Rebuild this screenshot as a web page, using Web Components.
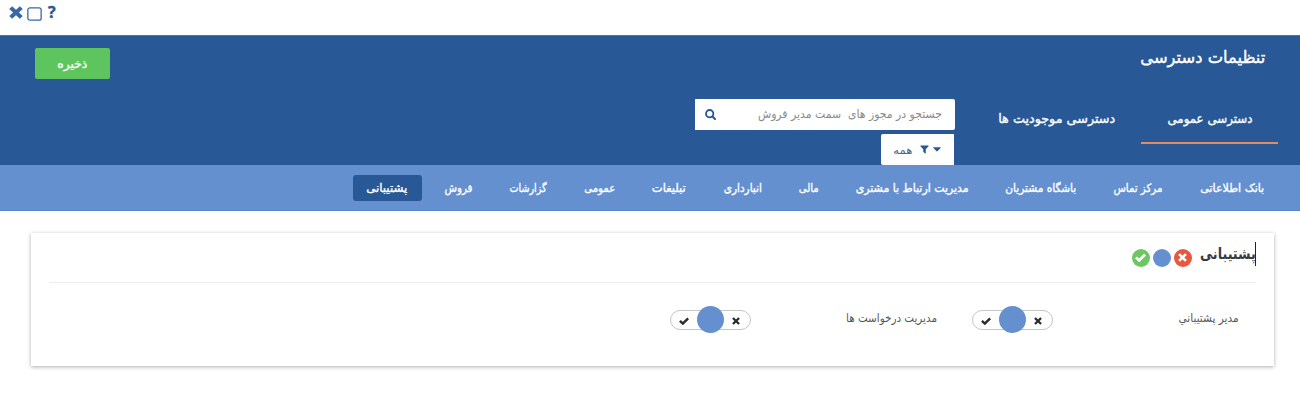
<!DOCTYPE html>
<html lang="fa" dir="rtl">
<head>
<meta charset="utf-8">
<title>تنظیمات دسترسی</title>
<style>
html,body{margin:0;background:#fff}
body{font-family:"DejaVu Sans","Noto Sans",sans-serif;overflow:hidden}
</style>
</head>
<body>
<access-page></access-page>
<script>
// Single-line label whose text is fitted to a given width.
class FitText extends HTMLElement {
  connectedCallback() {
    const w = +this.getAttribute('w'), s = this.getAttribute('size') || 11;
    const root = this.attachShadow({mode: 'open'});
    root.innerHTML = `<style>
      :host{display:inline-flex;flex:none;justify-content:flex-start;width:${w}px;font-size:${s}px;line-height:20px;height:20px;direction:rtl;-webkit-text-stroke:${this.getAttribute('stroke') || 0}px currentColor}
      span{display:block;flex:none;white-space:pre;transform-origin:100% 50%}
    </style><span><slot></slot></span>`;
    const span = root.querySelector('span');
    const real = span.getBoundingClientRect().width;
    if (real) span.style.transform = `scaleX(${w / real})`;
  }
}
customElements.define('fit-text', FitText);

const ICONS = {
  times: ['0 0 10 10', '<path d="M1.2 1.2 8.8 8.8M8.8 1.2 1.2 8.8" stroke="currentColor" stroke-width="2.9" fill="none"/>'],
  check: ['0 0 12 10', '<path d="M1.1 4.9 4.6 8.2 11 1.7" stroke="currentColor" stroke-width="3" fill="none"/>'],
  search: ['0 0 12 12', '<circle cx="5.1" cy="5.1" r="4" stroke="currentColor" stroke-width="2" fill="none"/><path d="M8.2 8.2 10.9 10.9" stroke="currentColor" stroke-width="2.2" stroke-linecap="round"/>'],
  filter: ['0 0 10 10', '<path d="M.6.6H9.4Q9.8 1.2 9.3 1.7L6.4 4.7V9.3Q6 9.8 5.5 9.4L3.6 7.6V4.7L.7 1.7Q.2 1.1.6.6Z" fill="currentColor"/>'],
  caret: ['0 0 8 5', '<path d="M.3.3H7.7Q8 .8 7.6 1.1L4.4 4.3Q4 4.6 3.6 4.3L.4 1.1Q0 .7.3.3Z" fill="currentColor"/>'],
  square: ['0 0 14 14', '<rect x=".8" y=".8" width="12.4" height="12.4" rx="2" stroke="currentColor" stroke-width="1.2" fill="none"/>']
};
class UiIcon extends HTMLElement {
  connectedCallback() {
    const [vb, body] = ICONS[this.getAttribute('name')];
    this.attachShadow({mode: 'open'}).innerHTML = `<style>
      :host{display:block;flex:none;width:${this.getAttribute('w')}px;height:${this.getAttribute('h')}px}
      svg{display:block;width:100%;height:100%}
    </style><svg viewBox="${vb}" preserveAspectRatio="none">${body}</svg>`;
  }
}
customElements.define('ui-icon', UiIcon);

class WindowBar extends HTMLElement {
  connectedCallback() {
    this.attachShadow({mode: 'open'}).innerHTML = `<style>
      :host{display:flex;direction:ltr;height:35px;box-sizing:border-box;padding:6px 0 0 9px;align-items:flex-start;color:#3a67a5}
      .sq{margin:1px 0 0 4px}
      b{font:bold 16px/15px "Open Sans","Noto Sans",sans-serif;margin:-1px 0 0 6px;color:#285896;-webkit-text-stroke:.4px #285896}
    </style>
    <ui-icon name="times" w="14" h="13"></ui-icon><ui-icon class="sq" name="square" w="15" h="14"></ui-icon><b>?</b>`;
  }
}
customElements.define('window-bar', WindowBar);

class SearchBox extends HTMLElement {
  connectedCallback() {
    this.attachShadow({mode: 'open'}).innerHTML = `<style>
      :host{display:block;width:260px;color:#285896}
      .field{display:flex;align-items:center;justify-content:space-between;height:31px;box-sizing:border-box;padding:0 13px 0 10px;background:#fff;border-radius:0 2px 2px 0;color:#285896}
      .field fit-text{color:#8b8b8b}
      .field fit-text,.field ui-icon{margin-bottom:1px}
      .drop{display:flex;align-items:center;height:31px;width:73px;box-sizing:border-box;margin:4px 1px 0 0;padding-right:13px;background:#fff;border-radius:2px 0 0 2px}
      .drop fit-text{color:#4a6487}
      .f{margin:0 4px 0 8px}
    </style>
    <div class="field"><fit-text w="184" size="11.5">جستجو در مجوز های  سمت مدیر فروش</fit-text><ui-icon name="search" w="11" h="11"></ui-icon></div>
    <div class="drop"><ui-icon name="caret" w="8" h="5"></ui-icon><ui-icon class="f" name="filter" w="9" h="9"></ui-icon><fit-text w="19" size="10.5">همه</fit-text></div>`;
  }
}
customElements.define('search-box', SearchBox);

class PageHeader extends HTMLElement {
  connectedCallback() {
    this.attachShadow({mode: 'open'}).innerHTML = `<style>
      :host{display:block;height:130px;box-sizing:border-box;border-top:1px solid #4a73a9;background:#285896;color:#fff}
      .top{display:flex;justify-content:space-between;height:63px;padding:0 35px;align-items:flex-start}
      .title{margin-top:12px}
      button{display:flex;justify-content:center;align-items:center;width:75px;height:31px;margin:12px 0 0;padding:0;border:0;border-radius:2px;background:#5ec55e;color:#fff;font:inherit}
      .row{display:flex;align-items:flex-start;padding-right:22px}
      .tab{display:flex;box-sizing:border-box;height:45px;padding:10px 26px 0;border-bottom:2px solid transparent}
      .on{border-color:#e88b5a}
      search-box{margin-right:17px}
    </style>
    <div class="top"><fit-text class="title" w="125" size="16.5" stroke=".4">تنظیمات دسترسی</fit-text><button><fit-text w="30" size="12" stroke=".35">ذخیره</fit-text></button></div>
    <div class="row">
      <div class="tab on"><fit-text w="85" size="13" stroke=".35">دسترسی عمومی</fit-text></div>
      <div class="tab"><fit-text w="117" size="13" stroke=".35">دسترسی موجودیت ها</fit-text></div>
      <search-box></search-box>
    </div>`;
  }
}
customElements.define('page-header', PageHeader);

class CategoryNav extends HTMLElement {
  connectedCallback() {
    const items = [['بانک اطلاعاتی',64],['مرکز تماس',49],['باشگاه مشتریان',71],['مدیریت ارتباط با مشتری',113],['مالی',20],['انبارداری',38],['تبلیغات',34],['عمومی',31],['گزارشات',37],['فروش',28],['پشتیبانی',41]];
    this.attachShadow({mode: 'open'}).innerHTML = `<style>
      :host{display:flex;align-items:center;gap:9.15px;height:46px;box-sizing:border-box;padding-right:22px;background:#6490cf;border-bottom:1px solid #5586cc;color:#fff}
      .item{display:flex;align-items:center;height:26px;padding:0 14px;border-radius:3px}
      .item:last-child{background:#285896}
    </style>` + items.map(([t, w]) => `<div class="item"><fit-text w="${w}" size="11.5" stroke=".35">${t}</fit-text></div>`).join('');
  }
}
customElements.define('category-nav', CategoryNav);

class StateDot extends HTMLElement {
  connectedCallback() {
    const n = this.getAttribute('icon');
    this.attachShadow({mode: 'open'}).innerHTML = `<style>
      :host{display:flex;flex:none;align-items:center;justify-content:center;width:18px;height:18px;border-radius:50%;background:${this.getAttribute('color')};color:#fff}
      ui-icon{margin-bottom:1px}
    </style>` + (n ? `<ui-icon name="${n}" w="${n === 'check' ? 11 : 9}" h="9"></ui-icon>` : '');
  }
}
customElements.define('state-dot', StateDot);

class TriToggle extends HTMLElement {
  connectedCallback() {
    this.attachShadow({mode: 'open'}).innerHTML = `<style>
      :host{display:flex;flex:none;align-items:center;justify-content:space-between;box-sizing:border-box;width:81px;height:20px;padding:0 10px 0 8px;border:1px solid #c6c6c6;border-radius:10px;color:#292c30}
      i{display:block;flex:none;width:27px;height:27px;margin-bottom:1px;border-radius:50%;background:#6490cf}
      ui-icon{margin-top:1px}
    </style><ui-icon name="times" w="8" h="8"></ui-icon><i></i><ui-icon name="check" w="10" h="8"></ui-icon>`;
  }
}
customElements.define('tri-toggle', TriToggle);

class PermissionCard extends HTMLElement {
  connectedCallback() {
    this.attachShadow({mode: 'open'}).innerHTML = `<style>
      :host{display:block;box-sizing:border-box;height:133px;margin:22px 26px 0 31px;padding:0 18px;background:#fff;box-shadow:0 1px 4px rgba(0,0,0,.32);color:#393b3f}
      .head{display:flex;align-items:flex-start;height:49px;border-bottom:1px solid #ececec}
      .caret{width:1px;height:24px;margin:9px 0 0 -1px;background:#222}
      .name{margin-top:11px;font-weight:bold}
      .dots{display:flex;gap:3px;margin:16px 8.5px 0 0}
      .row{display:flex;align-items:center;padding:27px 17px 0 0;height:20px;color:#55585a}
      .cell{display:flex;align-items:center;justify-content:space-between}
      .cell fit-text{margin-bottom:5px}
    </style>
    <div class="head"><div class="caret"></div><fit-text class="name" w="56" size="15.5">پشتیبانی</fit-text>
      <div class="dots"><state-dot color="#e9573f" icon="times"></state-dot><state-dot color="#6490cf"></state-dot><state-dot color="#6cc763" icon="check"></state-dot></div></div>
    <div class="row">
      <div class="cell" style="width:267px"><fit-text w="60" size="11.5">مدیر پشتیباني</fit-text><tri-toggle></tri-toggle></div>
      <div class="cell" style="width:267px;margin-right:35px"><fit-text w="91" size="11.5">مدیریت درخواست ها</fit-text><tri-toggle></tri-toggle></div>
    </div>`;
  }
}
customElements.define('permission-card', PermissionCard);

class AccessPage extends HTMLElement {
  connectedCallback() {
    this.attachShadow({mode: 'open'}).innerHTML = `<style>:host{display:block;width:1300px;height:414px;overflow:hidden}</style>
    <window-bar></window-bar><page-header></page-header><category-nav></category-nav><permission-card></permission-card>`;
  }
}
customElements.define('access-page', AccessPage);
</script>
</body>
</html>
